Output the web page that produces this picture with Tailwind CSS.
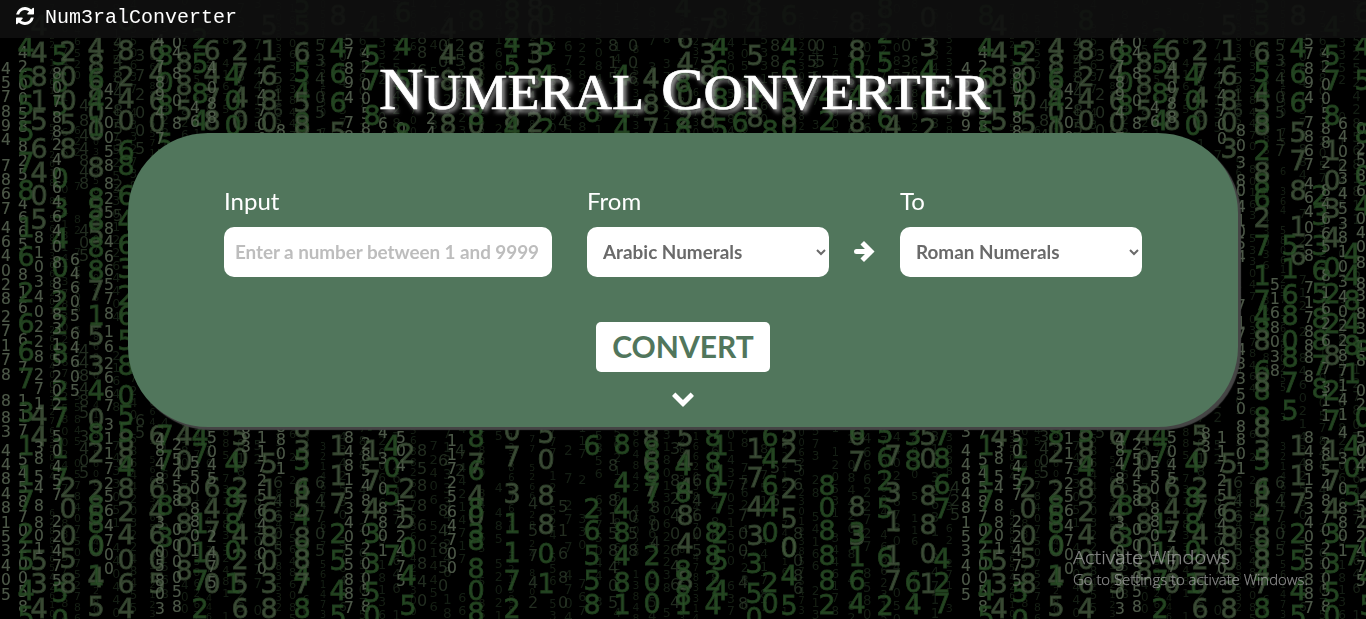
<!DOCTYPE html>
<html lang="en">
<head>
<meta charset="utf-8">
<title>Numeral Converter</title>
<script src="https://cdn.jsdelivr.net/npm/@tailwindcss/browser@4"></script>
</head>
<body class="relative isolate h-screen overflow-hidden bg-black font-['Lato',sans-serif] text-white">
<svg id="rain" aria-hidden="true" class="absolute inset-0 -z-10 h-full w-full" width="1366" height="619" font-family="DejaVu Sans, sans-serif" text-anchor="middle">
  <defs>
    <filter id="soft" x="-20" y="0" width="1000" height="619" filterUnits="userSpaceOnUse"><feGaussianBlur stdDeviation="0.6"/></filter>
    <g id="tile" filter="url(#soft)"></g>
  </defs>
  <use href="#tile"/>
  <use href="#tile" x="960"/>
</svg>

<nav class="flex h-[38px] items-center bg-[#0f0f0f]/90 pl-4">
  <svg class="-mt-1.5 h-[18px] w-[18px]" viewBox="0 0 1536 1536" fill="currentColor"><path d="M1511 928q0 5-1 7-64 268-268 434.500T764 1536q-146 0-282.500-55T238 1324l-129 129q-19 19-45 19t-45-19-19-45V960q0-26 19-45t45-19h448q26 0 45 19t19 45-19 45l-137 137q71 66 161 102t187 36q134 0 250-65t186-179q11-17 53-117 8-23 30-23h192q13 0 22.500 9.500t9.500 22.500zm25-800v448q0 26-19 45t-45 19h-448q-26 0-45-19t-19-45 19-45l138-138Q969 256 768 256q-134 0-250 65T332 500q-11 17-53 117-8 23-30 23H50q-13 0-22.500-9.500T18 608v-7q65-268 270-434.500T768 0q146 0 284 55.500T1297 212l130-129q19-19 45-19t45 19 19 45z"/></svg>
  <span class="-mt-0.5 ml-[11px] font-['Courier_New','Liberation_Mono',monospace] text-[20px] leading-6">Num3ralConverter</span>
</nav>

<h1 class="flex h-[95px] justify-center">
  <svg class="h-[95px] w-[640px] overflow-visible [filter:drop-shadow(3px_3px_2px_#9a9a9a)]" viewBox="0 0 640 95" font-family="Liberation Serif, serif" fill="#fff" stroke="#fff" stroke-width="0.7">
    <text y="70.500" x="16" font-size="60" textLength="265" lengthAdjust="spacingAndGlyphs">N<tspan font-size="51">UMERAL</tspan></text>
    <text y="70.500" x="298" font-size="60" textLength="329" lengthAdjust="spacingAndGlyphs">C<tspan font-size="51">ONVERTER</tspan></text>
  </svg>
</h1>

<main class="ml-32 flex h-[294px] w-[1110px] flex-col rounded-[80px] bg-[#51765c] px-24 pt-[50px] shadow-[3px_3px_1px_#454545]">
  <div class="flex items-end">
    <label class="flex w-[328px] flex-col text-[24px] leading-9"><span>Input</span>
      <input type="text" placeholder="Enter a number between 1 and 9999" class="mt-2 h-[50px] w-full rounded-[10px] bg-white pb-0.5 pl-[11px] pr-2 text-[18.900px] font-bold tracking-[-0.06px] text-[#666] placeholder:text-[#bdbdbd]">
    </label>
    <label class="ml-[35px] flex w-[242px] flex-col text-[24px] leading-9"><span>From</span>
      <select class="mt-2 h-[50px] w-full rounded-[10px] bg-white px-3 pb-0.5 text-[18.900px] font-bold text-[#6a6a6a]"><option>Arabic Numerals</option></select>
    </label>
    <svg class="mx-[25px] mb-[14px] h-[23px] w-[21px]" viewBox="0 0 21 23" fill="none" stroke="#fff" stroke-linejoin="round" stroke-linecap="round"><path stroke-width="5" d="M2.500 11.500H15"/><path stroke-width="5" stroke-linecap="square" stroke-linejoin="miter" d="M10 4.500L17 11.500L10 18.500"/></svg>
    <label class="flex w-[242px] flex-col text-[24px] leading-9"><span>To</span>
      <select class="mt-2 h-[50px] w-full rounded-[10px] bg-white px-3 pb-0.5 text-[18.900px] font-bold text-[#6a6a6a]"><option>Roman Numerals</option></select>
    </label>
  </div>
  <button class="mt-[45px] h-[50px] w-[174px] self-center rounded-[5px] bg-white pb-0.5 text-[30px] font-bold text-[#51765c]">CONVERT</button>
  <svg class="mt-5 h-[15px] w-[22px] self-center" viewBox="0 0 22 15" fill="#fff"><path d="M0.400 3.400L3.400.4L11 8L18.600.4L21.600 3.400Q22 4 21.500 4.600L11.500 14.500Q11 15 10.500 14.500L.5 4.600Q0 4 .4 3.400Z"/></svg>
</main>

<aside class="absolute left-[1073px] top-[542px] whitespace-nowrap font-['Open_Sans',sans-serif] text-[#a0a0a0]/80">
  <svg class="block h-[52px] w-[250px] overflow-visible" fill="currentColor" stroke="currentColor" stroke-width="0.25" font-weight="300"><text x="0" y="22" font-size="19" textLength="157" lengthAdjust="spacingAndGlyphs">Activate Windows</text><text x="0" y="43" font-size="14.500" textLength="235" lengthAdjust="spacingAndGlyphs">Go to Settings to activate Windows.</text></svg>
</aside>

<script>
// Digit columns of the rain: x | kind | "y:digit" marks, or "y/pitch/digits" runs.
// L = large grey, G = large green, S = small grey, D = dim.
const columns = `
6|S|68/14.3/457894 165/14.3/7867 227/14.3/464028 316/14.5/27178 400:8 417:8 431:3 450/14.4/44848153405
23|S|52:4 66:2 84:0 98:0 113:5 126:8 146:8 160:2 174:5 203:4 217:6 231:6 244:5 274:8 292:1 307:6 339:6 367:7 400:1 415:1 430:7 459:5 472:4 487:5 501:8 516:7 530:0 547:2 563:0 577:0 591:5 606:8
26|G|15:8 46:4 78:6 105:5 131:5 162:7 190:8 227:1 256:6 292:2 323:6 351:6 378:7 412:3 445:1 475:1 500:7 533:2 560:5 590:4 616:5
39|L|25:4 52:4 76:8 100:1 120:5 148:6 172:4 195:0 219:5 415:4 436:4 560:5 583:3 608:4
39|S|237/14.9/810340228 374:2 388:7 403:1 447:3 458:8 476:5 487:4 505:8 522:8 535:0 548:1
60|G|55:5 82:6 105:5 178:0 208:3 238:4 267:0 300:2 324:2 353:8 390:2 417:7 448:1 478:7 592:5 619:0
68|L|51:2 76:0 100:0 124:5 148:8 487:2 508:0 535:0 558:5 583:8
57|S|73:8 87:0 101:7 117:8 131:8 144:2 159:4 173:0 187:6 201:4 216:6 230:4 246:0 262:8 283:8 296:3 314:8 328:3 344:1 360:5 376:2 390:0 404:2 436:5 450:0 466:4 480:5 494:7 521:2 536:2 550:4 565:7 580:5
75|S|259/14.2/64605 333/14.4/64605
84|D|105:4 120:8 135:4 148:4 160:8 171:4 183:8 230:4 242:0 255:5 350:4 362:4 375:8 388:4 400:8 412:5 436:3 448:4 460:0 472:5
96|L|47:4 64:8 90:8 112:0 130:0 167:8 208:5 233:5 290:7 335:5 365:3 418:0 452:2 490:2 515:5 546:0 577:4 606:5
96|G|78:6 100:4 126:1 198:8 220:8 247:8 270:8 315:1 390:4 433:8 505:8 523:8 545:0 575:1
109|S|89:4 103:2 122:0 137:0 151:5 165:8 183:8 198:2 212:5 228:8 241:4 256:6 270:6 284:5 298:7 313:8 331:1 346:6 363:2 377:6 392:6 405:7 424:3 438:1 453:1 468:7 483:2 496:5 510:6 525:4 540:7 554:0 568:0
126|L|50:8 76:2 98:4 120:0 440:8 458:8 488:8 511:2 534:4 559:0 583:6 608:4
126|G|20:8 150:6 165:8 195:6 220:4 244:6 268:3 295:2 315:6 340:5 365:8 395:0 415:5 432:5 466:4
118|D|42:4 60:4 77:8 92:4 110:8 128:5 145:3 185:2 215:5
140|D|55:3 75:7 94:2 112:0 130:0 148:5 420:6 432:5
157|L|50:6 73:4 100:6 122:0 435:6 488:6 510:4 534:6 559:0 583:5
165|G|55:8 82:0 105:8 143:5 435:7 460:7 505:8 537:3
160|S|40:4 66:7 82:8 94:9 112:4 138:7 439:4 450:8 463:4 478:8 522:3 551:0 565:5 580:8 593:0 608:3
184|L|62:8 85:8 110:5 435:4 460:0 496:8 523:8 547:0 570:8
177|S|42:0 52:4 73:8 100:0 123:8 444:2 459:5 473:4 486:5 500:8 529:0 545:0 561:0 577:0 591:5 606:8
200|G|38:2 63:5 93:8 120:4 435:4 453:7 523:1 552:1 580:7 608:2
195|S|107:4 121:6 462:5 476:5 488:0 508:8 521:8 535:0 550:1
212|L|50:6 73:4 98:7 120:8 487:6 508:4 531:7 560:0 583:0
212|S|67:4 87:0 103:8 117:8 437:5 451:0 464:4 478:5 536:2 552:4 566:7 582:5
240|L|50:2 73:7 97:4 120:0 435:5 458:0 487:2 510:7 534:4 559:2 583:5 608:6
233|G|75:4 100:0 125:0 462:4 497:8 523:8 550:0 583:1
246|S|433:8 446:3
262|S|78:7 95:4 110:7 124:0 138:0 437/14.6/1172564700
269|L|25:5 50:1 75:6 100:8 122:0 148:3 463:5 489:1 512:6 536:8 560:0 583:3 608:8
278|D|78:5 95:1 110:6 482:6 500:4 516:6 533:0 550:5
281|S|130:8 145:0 162:3 180:8 190:0 206:4 220:1 231:0 243:5 256:4 305:7 322:1 334:7 349:4 363:3 378:3 394:5 408:0 426:8 439:8 453:0 468:1
302|G|3:5 25:5 72:5 92:4 122:8 150:2 183:8 198:6 245:7 275:1 300:7 315:4 330:8 370:6 390:8 417:8 460:5 488:4 515:4 550:8 575:4 608:8
302|L|52:6 102:5 125:8 172:8 217:2 340:8 382:8 427:8 450:3 488:6 507:5 537:8 559:8 583:7
320|D|45:5 60:3 78:4 97:0 112:5 135:1 150:7 482:6 500:4 516:7 533:0 550:5
315|S|284/14.4/5168038
338|L|15:8 132:5 160:7 190:8 226:1 255:6 445:1 475:1 503:7
338|G|47:4 73:6 102:6 533:2 560:5 590:4 615:5
330|G|245:5 268:1 294:6 315:8 340:0 357:8 382:7 410:5
349|S|40:5 53:7 68:8 82:9 97:4 122:7 136:8 150:6 164:7 183:4 197:6 211:4 227:0 240:2 255:8 287:7 302:1 317:7 331:8 345:8 357:8 376:8 437/14.2/8481534055887
360|G|195:2 215:3 245:3 270:6 293:5 318:8 340:8 365:7 388:8
366|S|52:4 66:2 84:0 98:0 113:5 128:8 142:8 162:2 190:8 203:4 218:6 233:6 246:5 275:8 292:1 308:6 323:2 340:6 368:7 387:3 400:1 415:1 443:2 455:8 470:5 485:4 500:8 517:7 530:0 548:2 563:0 578:0 590:5 606:8
372|L|150:1 180:0 208:3 237:4 355:8 450:1 480:7 508:4
372|G|26:4 55:5 80:7 115:8 267:0 293:2 323:2 390:2 420:7 533:3 563:3 592:5 615:0
383|S|123:6 136:4 151:0 165:2 178:3 193:4 208:5 223:3 237/14.8/8103402287141 432:4 458:3 488:0 508:8 522:8 535:0 550:1
392|G|253:4 275:4 300:8 323:4 345:8 373:1 445:4 467:0 495:5 555:7
401|S|128:0 148:2 160:5 175:8 190:6 218:0 232:4 246:0 262:8 283:8 295:3 313:8 328:3 346:1 360:8 390:0 404:2 437:5 450:0 465:4 506:5 522:2 536:2 550:4 566:7 580:5
403|G|12:6 45:4 80:5 133:8 175:0 205:4 350:8 417:0
407|L|453:2 488:2 518:5
408|G|547:0 575:4 605:5
422|D|38:8 52:8 70:6 450:8 468:5 485:8 505:8 525:6 545:0 563:8 581:4 600:0
431|S|118:2 132:4
448|L|28:4 54:4 80:8 124:8
443|D|45:0 61:0 460:6 510:8 530:4 548:8 567:5 585:0
452|S|440/14.2/1172564700
460|D|45:2 60:5 78:4 94:6 450:4 470:2
476|L|52:8 78:8 124:0 463:7 495:4 515:0
476|G|20:8 115:8 437:8 470:6 508:8 533:3 540:8 568:8 590:0 612:8
512|L|118:8 430:0 456:7 493:3
512|G|10:8 30:2 42:4 65:5 127:4 523:1 552:1 580:7 608:2
535|L|8:8 28:0 53:3 78:8 122:2
546|L|433:5 459:0 495:8 524:8
546|G|15:0 45:5 75:4 128:2 553:0 583:1
533|D|503:4 530:5 555:7 582:4 602:2
563|D|506:5 530:1 553:6 577:8 602:0 122:4
592|G|112:6 445:6 508:2 530:6 555:5 580:5 604:8
613|D|45:8 62:1 78:5 465:8 500:8 518:1 533:5 550:8 567:4 585:0 602:5
622|G|75:4 112:4 128:4 444:8 482:4 508:4 532:8 555:4 582:8 604:1
633|D|45:0 62:0 78:6 516:0 533:5 550:8
651|L|78:4 104:8 128:7 437:8 461:6 486:7
652|G|450:8 472:8 493:7 555:2 581:0 603:0
655|D|507:8 525:0 542:4
685|L|38:6 62:4 95:0 118:2 436:5 460:4 488:4 515:8 543:4 580:8
683|G|7:4 82:8 128:8 465:4 492:8 570:8 595:8 604:1
675|D|448:3 480:8 498:2 515:4 533:0 550:6 566:4 584:6 602:4
697|D|480:6 500:4 515:6 533:0 550:5
708|L|28:7 53:3 75:8 118:8
720|G|18:8 45:4 70:6 98:8 128:5 445:1 475:1 503:7 533:2 560:5 590:4
713|G|436:8 462:8 484:0 532:8 555:8 580:2 604:4
743|D|484:7 515:7 533:0 550:0 582:4 603:8
755|L|55:5 117:8 448:1 477:7 506:4 535:3
754|G|5:8 26:4 92:4 563:3 593:5 617:0
740|G|122:6
770|G|130:8 436:6 458:4 485:6 506:4 532:0 582:2 603:0
775|D|45:8 61:8 78:5 467:5 500:6
789|G|15:6 45:4 70:6 102:5 127:0 547:0 575:4 605:5
789|L|117:8 432:5 452:2 488:2 518:5 547:0
798|D|466:5 484:6 533:8 560:0 575:8 588:6
812|D|45:0 61:5 78:7
820|D|45:0 61:5
827|G|95:4 120:2 485:8 507:0 530:8 555:8 580:8 604:2
857|L|22:8 50:8 122:8 435:6 461:7 506:8 535:3
857|G|68:0 95:4 430:6 532:3 556:1 580:6 603:4
885|G|8:8 33:2 62:5 95:8 118:6 433:5 457:6 480:2 508:5 557:6 605:2
893|L|125:4 455:7 492:3 521:1 555:1 580:7
906|D|45:0 61:3 78:7
913|G|435:3 460:8 582:6 604:4
928|L|17:0 46:3 128:2 435:5 458:0 495:8 524:8 553:0 583:1
928|G|70:4 100:0
942|G|435:7 458:8 484:6 508:7 558:4 582:2 603:7
955|D|487:4 500:2 514:5`;
const style = {
  L: [27, '#45573f', .88, '#34452f', 1],
  G: [27, '#2b5028', .88, '#234521', .9],
  S: [15.5, '#566351', .9, '#566351', .15],
  D: [16, '#354632', .65, 'none', 0]
};
const tile = document.getElementById('tile');
const put = (x, y, digit, size, fill, opacity, stroke, width) => {
  const t = document.createElementNS('http://www.w3.org/2000/svg', 'text');
  const attrs = { x, y: y + size * .365, 'font-size': size, fill, opacity, stroke, 'stroke-width': width };
  for (const k in attrs) t.setAttribute(k, attrs[k]);
  t.textContent = digit;
  tile.append(t);
};
// Faint far-away columns behind the main ones.
let seed = 41;
const rnd = () => (seed = (seed * 16807) % 2147483647) / 2147483647;
for (let x = 52; x < 950; x += 12 + rnd() * 9) {
  const size = 9 + rnd() * 5;
  let y = rnd() * 20;
  while (y < 619) {
    if (rnd() > .17) put(x, y, Math.floor(rnd() * 9), size, '#344a30', .42, 'none', 0);
    y += size * 1.02;
  }
}
for (const row of columns.trim().split('\n')) {
  const [x, kind, marks] = row.split('|');
  for (const mark of marks.split(' ')) {
    if (mark.includes('/')) {
      const [y, pitch, digits] = mark.split('/');
      [...digits].forEach((d, i) => put(+x, +y + i * pitch, d, ...style[kind]));
    } else {
      const [y, d] = mark.split(':');
      put(+x, +y, d, ...style[kind]);
    }
  }
}
</script>
</body>
</html>
